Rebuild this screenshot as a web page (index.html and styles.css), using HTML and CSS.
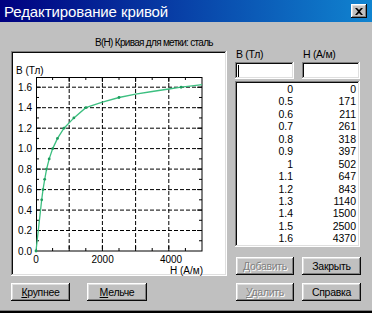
FILE: index.html
```html
<!DOCTYPE html>
<html lang="ru">
<head>
  <meta charset="UTF-8">
  <title>Редактирование кривой</title>
  <link rel="stylesheet" href="styles.css">
</head>
<body>
  <div class="window">
    <div class="titlebar">
      <span class="title">Редактирование кривой</span>
      <button class="close" aria-label="Закрыть">
        <svg width="8" height="7" viewBox="0 0 8 7"><path d="M0 0h2l2 2 2-2h2L5 3.5 8 7H6L4 5 2 7H0l3-3.5z" fill="#000"/></svg>
      </button>
    </div>

    <div class="content">
      <div class="left">
        <div class="caption">B(H) Кривая для метки: сталь</div>
        <div class="chart-frame">
          <svg class="chart" width="212" height="221" viewBox="0 0 212 221">
            <g class="grid">
              <line x1="56.2" y1="24" x2="56.2" y2="198"/>
              <line x1="89.4" y1="24" x2="89.4" y2="198"/>
              <line x1="122.6" y1="24" x2="122.6" y2="198"/>
              <line x1="155.8" y1="24" x2="155.8" y2="198"/>
              <line x1="23" y1="177.5" x2="189" y2="177.5"/>
              <line x1="23" y1="157.1" x2="189" y2="157.1"/>
              <line x1="23" y1="136.6" x2="189" y2="136.6"/>
              <line x1="23" y1="116.1" x2="189" y2="116.1"/>
              <line x1="23" y1="95.6" x2="189" y2="95.6"/>
              <line x1="23" y1="75.2" x2="189" y2="75.2"/>
              <line x1="23" y1="54.7" x2="189" y2="54.7"/>
              <line x1="23" y1="34.2" x2="189" y2="34.2"/>
            </g>
            <g id="ticks" class="ticks"></g>
            <rect class="plot" x="23.5" y="24.5" width="165.5" height="173.5"/>
            <polyline class="curve" points="23,198 28.7,146.8 30,136.6 31.7,126.4 33.6,116.1 36.2,105.9 39.7,95.6 44.5,85.4 51,75.2 60.9,64.9 72.8,54.7 89.4,49.1 106,44.5 122.6,41.2 139.2,38.5 155.8,36 168.1,34.2 179,32.8 189,31.7"/>
            <g id="dots" class="dots"></g>
            <g class="labels">
              <text x="3" y="21">B (Тл)</text>
              <text class="ylab" x="19" y="201.5">0.0</text>
              <text class="ylab" x="19" y="181">0.2</text>
              <text class="ylab" x="19" y="160.6">0.4</text>
              <text class="ylab" x="19" y="140.1">0.6</text>
              <text class="ylab" x="19" y="119.6">0.8</text>
              <text class="ylab" x="19" y="99.1">1.0</text>
              <text class="ylab" x="19" y="78.7">1.2</text>
              <text class="ylab" x="19" y="58.2">1.4</text>
              <text class="ylab" x="19" y="37.7">1.6</text>
              <text class="xlab" x="23" y="210">0</text>
              <text class="xlab" x="89.6" y="210">2000</text>
              <text class="xlab" x="158" y="210">4000</text>
              <text class="ylab" x="190" y="220.5">H (А/м)</text>
            </g>
          </svg>
        </div>
        <div class="btn-row">
          <button class="btn"><u>К</u>рупнее</button>
          <button class="btn"><u>М</u>ельче</button>
        </div>
      </div>

      <div class="right">
        <div class="fields">
          <div class="field">
            <span class="field-label">B (Тл)</span>
            <div class="edit"><span class="caret"></span></div>
          </div>
          <div class="field">
            <span class="field-label">H (А/м)</span>
            <div class="edit"></div>
          </div>
        </div>
        <div class="list" id="list"></div>
        <div class="btn-grid">
          <button class="btn" disabled>Добавить</button>
          <button class="btn">Закрыть</button>
          <button class="btn" disabled><u>У</u>далить</button>
          <button class="btn">Справка</button>
        </div>
      </div>
    </div>
  </div>

  <script>
    const points = [
      [0, 0], [0.5, 171], [0.6, 211], [0.7, 261], [0.8, 318], [0.9, 397], [1, 502],
      [1.1, 647], [1.2, 843], [1.3, 1140], [1.4, 1500], [1.5, 2500], [1.6, 4370]
    ];

    const NS = 'http://www.w3.org/2000/svg';
    const px = h => 23 + h * 0.0332;
    const py = b => 198 - b * 102.35;

    // table on the right
    const list = document.getElementById('list');
    points.forEach(p => {
      const row = document.createElement('div');
      row.className = 'row';
      row.innerHTML = '<span>' + p[0] + '</span><span>' + p[1] + '</span>';
      list.appendChild(row);
    });

    // markers on the curve
    const dots = document.getElementById('dots');
    points.forEach(p => {
      const c = document.createElementNS(NS, 'circle');
      c.setAttribute('cx', px(p[1]));
      c.setAttribute('cy', py(p[0]));
      c.setAttribute('r', 1.4);
      dots.appendChild(c);
    });

    // tick marks on all four sides
    const ticks = document.getElementById('ticks');
    function tick(x1, y1, x2, y2) {
      const l = document.createElementNS(NS, 'line');
      l.setAttribute('x1', x1); l.setAttribute('y1', y1);
      l.setAttribute('x2', x2); l.setAttribute('y2', y2);
      ticks.appendChild(l);
    }
    for (let h = 500; h < 5000; h += 500) {
      const len = h % 1000 === 0 ? 5 : 3;
      const x = px(h);
      tick(x, 198, x, 198 - len);
      tick(x, 24, x, 24 + len);
    }
    for (let i = 1; i <= 16; i++) {
      const len = i % 2 === 0 ? 5 : 3;
      const y = py(i / 10);
      tick(23, y, 23 + len, y);
      tick(189, y, 189 - len, y);
    }
  </script>
</body>
</html>
```

FILE: styles.css
```css
body {
  margin: 0;
  background-color: #c0c0c0;
  font-family: "Liberation Sans", Arial, sans-serif;
  font-size: 10.5px;
  color: #000;
}
.window {
  width: 372px;
  height: 313px;
  box-sizing: border-box;
  border-bottom: 2px solid #000;
  box-shadow: inset 0 -1px 0 #808080;
  overflow: hidden;
}
.titlebar {
  height: 22px;
  display: flex;
  align-items: center;
  justify-content: space-between;
  padding: 0 5px 0 4px;
  background: linear-gradient(to right, #000080, #1084d0);
  color: #fff;
}
.title {
  font-size: 15px;
  letter-spacing: -0.1px;
}
.close {
  width: 16px;
  height: 14px;
  padding: 0;
  border: none;
  background-color: #c0c0c0;
  display: flex;
  align-items: center;
  justify-content: center;
  box-shadow: inset -1px -1px #0a0a0a, inset 1px 1px #fff, inset -2px -2px #808080, inset 2px 2px #dfdfdf;
}
.content {
  display: flex;
  gap: 8px;
  padding-left: 11px;
}
.left {
  width: 216px;
}
.caption {
  height: 29px;
  box-sizing: border-box;
  padding: 15px 0 0 84px;
  line-height: 12px;
  font-size: 10px;
  letter-spacing: -0.7px;
  white-space: nowrap;
}
.chart-frame {
  height: 225px;
  box-sizing: border-box;
  padding: 2px;
  background-color: #fff;
  box-shadow: inset -1px -1px #fff, inset 1px 1px #808080, inset -2px -2px #dfdfdf, inset 2px 2px #0a0a0a;
}
.chart {
  display: block;
  overflow: visible;
}
.grid line {
  stroke: #000;
  stroke-width: 1;
  stroke-dasharray: 4 2;
}
.ticks line {
  stroke: #000;
  stroke-width: 1;
}
.plot {
  fill: none;
  stroke: #000;
  stroke-width: 1;
}
.curve {
  fill: none;
  stroke: #3cbf80;
  stroke-width: 1.3;
}
.dots circle {
  fill: #1f9d5e;
}
.labels text {
  font-family: "Liberation Sans", Arial, sans-serif;
  font-size: 10px;
  fill: #000;
}
.labels .ylab {
  text-anchor: end;
}
.labels .xlab {
  text-anchor: middle;
}
.btn-row {
  display: flex;
  gap: 17px;
  margin-top: 7px;
}
.btn {
  width: 59px;
  height: 18px;
  padding: 0;
  border: none;
  background-color: #c0c0c0;
  font-family: inherit;
  font-size: 10.5px;
  letter-spacing: -0.3px;
  color: #000;
  box-shadow: inset -1px -1px #0a0a0a, inset 1px 1px #fff, inset -2px -2px #808080, inset 2px 2px #dfdfdf;
}
.btn-row .btn + .btn {
  width: 60px;
}
.btn:disabled {
  color: #808080;
  text-shadow: 1px 1px 0 #fff;
}
.right {
  width: 126px;
}
.fields {
  display: flex;
  gap: 8px;
  margin-top: 26px;
}
.field {
  width: 59px;
}
.field + .field {
  width: 58px;
}
.field-label {
  display: block;
  height: 14px;
  line-height: 12px;
  padding-left: 1px;
  letter-spacing: -0.3px;
}
.edit {
  height: 17px;
  box-sizing: border-box;
  padding: 3px 0 0 3px;
  background-color: #fff;
  box-shadow: inset -1px -1px #fff, inset 1px 1px #808080, inset -2px -2px #dfdfdf, inset 2px 2px #0a0a0a;
}
.caret {
  display: block;
  width: 1px;
  height: 12px;
  background-color: #000;
}
.list {
  width: 125px;
  height: 166px;
  box-sizing: border-box;
  margin-top: 2px;
  padding: 2px 4px 2px 2px;
  background-color: #fff;
  box-shadow: inset -1px -1px #fff, inset 1px 1px #808080, inset -2px -2px #dfdfdf, inset 2px 2px #0a0a0a;
}
.row {
  display: grid;
  grid-template-columns: 56px 63px;
  height: 12.45px;
  line-height: 12.45px;
  text-align: right;
}
.btn-grid {
  display: grid;
  grid-template-columns: 58px 59px;
  gap: 8px;
  margin-top: 10px;
  padding-left: 1px;
}
.btn-grid .btn {
  width: auto;
}
```
